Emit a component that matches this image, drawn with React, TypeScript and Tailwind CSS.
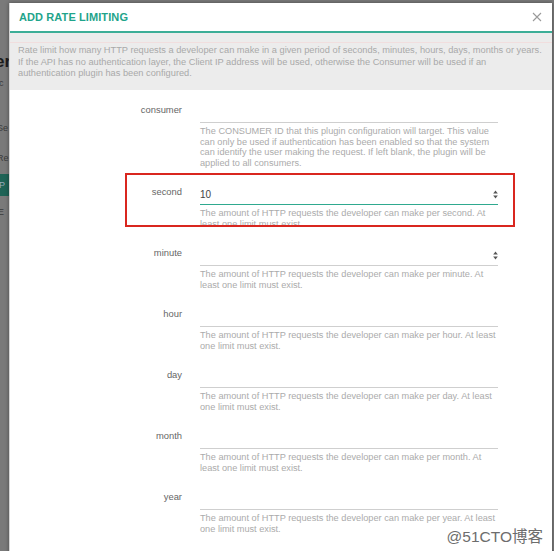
import React from "react"

interface Field {
  label: string
  lines: string[]
  value?: string
  focused?: boolean
  spin?: boolean
  marked?: boolean
}

const fields: Field[] = [
  {
    label: "consumer",
    lines: [
      "The CONSUMER ID that this plugin configuration will target. This value",
      "can only be used if authentication has been enabled so that the system",
      "can identify the user making the request. If left blank, the plugin will be",
      "applied to all consumers.",
    ],
  },
  {
    label: "second",
    value: "10",
    focused: true,
    spin: true,
    marked: true,
    lines: ["The amount of HTTP requests the developer can make per second. At", "least one limit must exist."],
  },
  {
    label: "minute",
    spin: true,
    lines: ["The amount of HTTP requests the developer can make per minute. At", "least one limit must exist."],
  },
  {
    label: "hour",
    lines: ["The amount of HTTP requests the developer can make per hour. At least", "one limit must exist."],
  },
  {
    label: "day",
    lines: ["The amount of HTTP requests the developer can make per day. At least", "one limit must exist."],
  },
  {
    label: "month",
    lines: ["The amount of HTTP requests the developer can make per month. At", "least one limit must exist."],
  },
  {
    label: "year",
    lines: ["The amount of HTTP requests the developer can make per year. At least", "one limit must exist."],
  },
]

function Spinner() {
  return (
    <svg width="5" height="9" viewBox="0 0 5 9" className="text-[#555]">
      <path d="M2.5 0.5 L4.8 3.4 L0.2 3.4 Z" fill="currentColor" />
      <path d="M2.5 8.5 L4.8 5.6 L0.2 5.6 Z" fill="currentColor" />
    </svg>
  )
}

function FieldRow({ f }: { f: Field }) {
  return (
    <div className="relative flex mb-[17.5px]">
      <div className="w-[190px] shrink-0 pr-[18px] text-right text-[9.4px] leading-[12px] text-[#666]">{f.label}</div>
      <div className="w-[298px] shrink-0">
        <div
          className={`h-[19px] flex items-center justify-between ${
            f.focused ? "border-b-[1.5px] border-[#2fa98f]" : "border-b border-[#cfcfcf]"
          }`}
        >
          <span className="text-[10px] text-[#444]">{f.value}</span>
          {f.spin && <Spinner />}
        </div>
        <div className="mt-[3.5px] text-[9.2px] leading-[10.5px] text-[#ababab]">
          {f.lines.map(l => (
            <div key={l} className="whitespace-nowrap">{l}</div>
          ))}
        </div>
      </div>
      {f.marked && (
        <div className="absolute left-[115px] top-[-13px] w-[390px] h-[54px] border-2 border-[#d9261f] pointer-events-none" />
      )}
    </div>
  )
}

export default function App() {
  return (
    <div className="relative w-[554px] h-[551px] overflow-hidden bg-[#7a7a7a] font-['Liberation_Sans',Arial,sans-serif]">
      {/* page behind the overlay, only its left edge shows */}
      <div className="flex flex-col w-[9px] overflow-hidden pt-[52px]">
        <div className="-ml-[5px] text-[17px] font-bold leading-[20px] text-[#1c1c1c]">er</div>
        <div className="-ml-[3px] mt-[5px] text-[9px] leading-[12px] text-[#3a3a3a]">ic</div>
        <div className="-ml-[3px] mt-[33px] text-[9px] leading-[12px] text-[#3a3a3a]">Se</div>
        <div className="-ml-[3px] mt-[18px] text-[9px] leading-[12px] text-[#3a3a3a]">Re</div>
        <div className="mt-[10px] h-[22px] bg-[#1f6356] text-[9px] leading-[22px] text-[#9ab] -ml-[1px]">P</div>
        <div className="-ml-[2px] mt-[10px] text-[9px] leading-[12px] text-[#3a3a3a]">E</div>
      </div>

      {/* modal */}
      <div className="absolute left-[9px] top-[3px] w-[543px] h-[600px] bg-white border-l border-[#d6d6d6] shadow-[0_0_4px_rgba(0,0,0,0.4)]">
        <div className="h-[30px] flex items-center justify-between pl-[9px] pr-[10px] border-b-2 border-[#3cae97]">
          <h1 className="text-[11px] font-bold tracking-[0.1px] text-[#1fa48b]">ADD RATE LIMITING</h1>
          <svg width="10" height="10" viewBox="0 0 10 10" className="text-[#9a9a9a]">
            <path d="M1 1 L9 9 M9 1 L1 9" stroke="currentColor" strokeWidth="1.1" />
          </svg>
        </div>

        <div className="bg-[#ececec] pt-[9px] pb-[10px]">
          <div className="h-px bg-[#f1dede]" />
          <div className="pt-[2px] pl-[8px] text-[9.25px] leading-[11.5px] text-[#a9a9a9]">
            <div className="whitespace-nowrap">
              Rate limit how many HTTP requests a developer can make in a given period of seconds, minutes, hours, days, months or years.
            </div>
            <div className="whitespace-nowrap">
              If the API has no authentication layer, the Client IP address will be used, otherwise the Consumer will be used if an
            </div>
            <div className="whitespace-nowrap">authentication plugin has been configured.</div>
          </div>
        </div>

        <div className="pt-[14px]">
          {fields.map(f => (
            <FieldRow key={f.label} f={f} />
          ))}
        </div>
      </div>

      <div className="absolute right-[11px] bottom-[5px] text-[15.5px] leading-[18px] text-[#6d6d6d] font-['Liberation_Sans','Noto_Sans_CJK_SC',sans-serif] [text-shadow:0_0_2px_#fff,0_0_1px_#fff]">
        @51CTO博客
      </div>
    </div>
  )
}
